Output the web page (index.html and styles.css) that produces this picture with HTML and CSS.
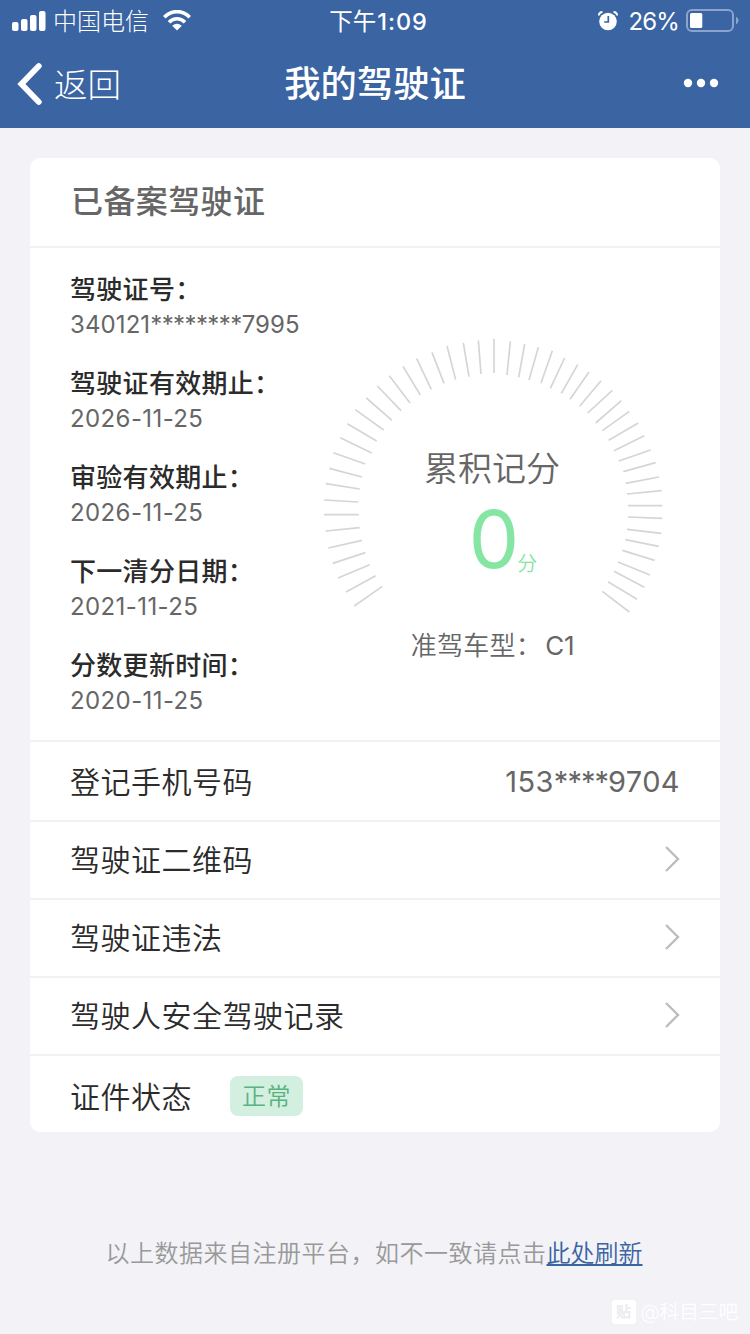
FILE: index.html
```
<!doctype html>
<html lang="zh-CN">

<head>
  <meta charset="UTF-8" />
  <meta name="viewport" content="width=device-width" />
  <title>我的驾驶证</title>
  <link rel="stylesheet" href="styles.css">
</head>

<body>
  <header class="top">
    <div class="status">
      <div class="status-left">
        <svg class="signal" width="34" height="22" viewBox="0 0 34 22" fill="#fff">
          <rect x="0" y="12" width="6.5" height="9" rx="2" />
          <rect x="9" y="9" width="6.5" height="12" rx="2" />
          <rect x="18" y="5" width="6.5" height="16" rx="2" />
          <rect x="27" y="1" width="6.5" height="20" rx="2" />
        </svg>
        <span class="carrier">中国电信</span>
        <svg class="wifi" width="28" height="21" viewBox="0 0 28 21" fill="none" stroke="#fff">
          <path d="M1.3 7.2C8.5-.2 19.5-.2 26.7 7.2" stroke-width="3.7" />
          <path d="M6 12.2C10.7 7.6 17.3 7.6 22 12.2" stroke-width="3.6" />
          <path d="M9.2 15.8Q14 11.8 18.8 15.8L14 20.6Z" fill="#fff" stroke="none" />
        </svg>
      </div>
      <div class="time">下午<span>1:09</span></div>
      <div class="status-right">
        <svg class="alarm" width="20" height="20" viewBox="0 0 20 20">
          <circle cx="10" cy="10.5" r="8.8" fill="#fff" />
          <path d="M.8 4.5Q1 1.2 4.5 1M19.2 4.5Q19 1.2 15.5 1" fill="none" stroke="#fff" stroke-width="1.8" />
          <path d="M10.3 5v6H6.2" fill="none" stroke="#3a64a2" stroke-width="1.7" />
        </svg>
        <span class="percent">26%</span>
        <svg class="battery" width="54" height="24" viewBox="0 0 54 24">
          <rect x="1" y="1" width="46" height="21" rx="5" fill="none" stroke="#8aa4cd" stroke-width="2" />
          <rect x="4" y="4" width="12.3" height="15" rx="1.5" fill="#fff" />
          <path d="M50 7.5q5 4 0 8z" fill="#8aa4cd" />
        </svg>
      </div>
    </div>
    <nav class="nav">
      <a class="back">
        <svg width="26" height="44" viewBox="0 0 26 44" fill="none" stroke="#fff" stroke-width="5.8" stroke-linecap="round" stroke-linejoin="miter">
          <path d="M21.8 4 4.4 22l17.4 18" />
        </svg>
        <span>返回</span>
      </a>
      <h1>我的驾驶证</h1>
      <svg class="more" width="36" height="10" viewBox="0 0 36 10" fill="#fff">
        <circle cx="5" cy="5" r="4.2" />
        <circle cx="18" cy="5" r="4.2" />
        <circle cx="31" cy="5" r="4.2" />
      </svg>
    </nav>
  </header>

  <main class="card">
    <h2>已备案驾驶证</h2>
    <section class="info">
      <dl>
        <dt>驾驶证号：</dt>
        <dd class="code">340121<i>********</i>7995</dd>
        <dt>驾驶证有效期止：</dt>
        <dd>2026-11-25</dd>
        <dt>审验有效期止：</dt>
        <dd>2026-11-25</dd>
        <dt>下一清分日期：</dt>
        <dd>2021-11-25</dd>
        <dt>分数更新时间：</dt>
        <dd>2020-11-25</dd>
      </dl>
      <div class="gauge">
        <svg class="dial" width="370" height="300" viewBox="0 0 1110 900" fill="none" stroke="#d5d5d5" stroke-width="5">
          <path d="M133 828 217 769M108 786 197 737M84 744 179 704M68 700 166 668M55 654 156 631M47 603 149 593M42 554H146M42 510 145 516M47 461 149 477M58 415 156 441M70 368 166 402M91 323 185 369M112 281 200 333M136 239 221 300M169 204 246 271M202 168 273 242M238 137 300 219M279 109 331 195M320 86 364 178M366 67 402 160M411 48 437 149M460 39 477 140M505 31 513 132M552 26V129" />
          <path transform="translate(540)" d="M61 34 51 135M104 42 86 142M145 52 117 150M187 62 153 159M224 84 181 175M263 104 214 190M297 126 240 208M333 152 269 229M367 181 293 249M394 212 317 279M418 244 337 302M445 279 356 331M463 317 372 362M482 360 386 393M497 398 400 425M507 441 407 460M515 482 411 492M517 527H414M517 565 414 561M514 610 411 598M506 649 406 629M494 691 397 661M480 735 384 696M463 772 372 724M441 808 354 755M418 846 337 784" />
        </svg>
        <div class="score">
          <p class="score-title">累积记分</p>
          <p class="score-value"><b>0</b><span>分</span></p>
        </div>
        <p class="type">准驾车型：<span>C1</span></p>
      </div>
    </section>
    <div class="row phone">
      <span>登记手机号码</span>
      <span class="number">153<i>****</i>9704</span>
    </div>
    <a class="row">
      <span>驾驶证二维码</span>
      <svg class="arrow" width="16" height="28" viewBox="0 0 16 28"><path d="M2 2 14 14 2 26" /></svg>
    </a>
    <a class="row">
      <span>驾驶证违法</span>
      <svg class="arrow" width="16" height="28" viewBox="0 0 16 28"><path d="M2 2 14 14 2 26" /></svg>
    </a>
    <a class="row">
      <span>驾驶人安全驾驶记录</span>
      <svg class="arrow" width="16" height="28" viewBox="0 0 16 28"><path d="M2 2 14 14 2 26" /></svg>
    </a>
    <div class="row state">
      <span>证件状态</span>
      <span class="tag">正常</span>
    </div>
  </main>

  <p class="tip">以上数据来自注册平台，如不一致请点击<a>此处刷新</a></p>
  <footer class="mark"><span class="mark-icon">贴</span><span>@科目三吧</span></footer>
</body>

</html>
```
FILE: styles.css
```
* {
  box-sizing: border-box;
}

body {
  margin: 0;
  height: 1334px;
  overflow: hidden;
  background: #f2f2f7;
  color: #2b2b2b;
  font-family: Inter, "Noto Sans CJK SC", sans-serif;
  font-weight: 350;
  display: flex;
  flex-direction: column;
}

h1, h2, p, dl, dd {
  margin: 0;
}

i {
  font-style: normal;
}

svg {
  display: block;
  flex: none;
}

/* 顶部 */
.top {
  height: 128px;
  background: #3a64a2;
  color: #fff;
}

.status {
  height: 40px;
  display: grid;
  grid-template-columns: 1fr auto 1fr;
  align-items: center;
  padding: 0 10px 0 12px;
  line-height: 40px;
}

.status-left,
.status-right {
  display: flex;
  align-items: center;
}

.status-right {
  justify-content: flex-end;
}

.signal,
.wifi,
.alarm,
.battery {
  margin-bottom: 1px;
}

.carrier {
  margin: 0 14px 0 7px;
  padding-top: 2px;
  font-size: 24px;
  font-weight: 300;
}

.time {
  padding: 2px 0 0 5px;
  font-size: 23.5px;
  font-weight: 400;
}

.time span {
  margin-left: 1px;
  font-weight: 500;
  letter-spacing: 0.9px;
}

.percent {
  margin: 0 7px 0 11px;
  padding-top: 2px;
  font-size: 24px;
  font-weight: 400;
  letter-spacing: -0.9px;
}

.nav {
  height: 88px;
  display: grid;
  grid-template-columns: 1fr auto 1fr;
  align-items: center;
  padding: 0 17px;
}

.back {
  display: flex;
  align-items: center;
  gap: 11px;
  font-size: 33.5px;
  font-weight: 300;
}

.back span {
  padding-bottom: 3px;
}

.nav h1 {
  font-size: 36.3px;
  font-weight: 500;
  line-height: 50px;
}

.more {
  justify-self: end;
  margin: 0 14px 2px 0;
}

/* 卡片 */
.card {
  width: 690px;
  height: 974px;
  margin: 30px 30px 0;
  border-radius: 10px;
  background: #fff;
}

.card h2 {
  height: 90px;
  padding-left: 41px;
  border-bottom: 2px solid #f1f1f3;
  color: #666;
  font-size: 32px;
  font-weight: 500;
  line-height: 88px;
  letter-spacing: 0.4px;
}

.info {
  height: 492px;
  display: grid;
  grid-template-columns: 280px 370px;
}

dl {
  padding: 23px 0 0 40px;
}

dt {
  height: 37px;
  font-size: 26px;
  font-weight: 500;
  line-height: 38px;
  letter-spacing: 0.3px;
  white-space: nowrap;
}

dd {
  height: 34px;
  margin-bottom: 23px;
  color: #666;
  font-size: 24px;
  font-weight: 400;
  line-height: 34px;
  letter-spacing: 0.4px;
  white-space: nowrap;
}

.code {
  letter-spacing: 0.1px;
}

.code i {
  letter-spacing: -0.6px;
}

.gauge {
  padding-top: 82px;
  display: grid;
  grid-template-rows: 300px auto;
  color: #666;
  text-align: center;
}

.dial,
.score {
  grid-area: 1 / 1;
}

.score {
  padding: 115px 6px 0 0;
}

.score-title {
  font-size: 34px;
  line-height: 48px;
}

.score-value {
  display: flex;
  justify-content: center;
  align-items: baseline;
  padding-left: 22px;
  color: #85e5a3;
  line-height: 92px;
}

.score-value b {
  font-size: 80px;
  font-weight: 400;
}

.score-value span {
  margin-left: -2px;
  font-size: 20px;
  transform: translateY(3px);
}

.type {
  padding-right: 5px;
  font-size: 26px;
  line-height: 32px;
  letter-spacing: 0.3px;
}

.type span {
  margin-left: 3px;
  font-weight: 400;
  letter-spacing: -0.2px;
}

.row {
  height: 78px;
  padding: 0 40px 2px;
  border-top: 2px solid #f1f1f3;
  display: flex;
  align-items: center;
  justify-content: space-between;
  font-size: 30px;
  letter-spacing: 0.5px;
}

.row > span:first-child {
  margin-bottom: 2px;
}

.phone {
  height: 80px;
  padding-bottom: 0;
}

.number {
  color: #666;
  font-size: 29px;
  font-weight: 400;
  letter-spacing: 0.4px;
}

.number i {
  letter-spacing: -1px;
}

.arrow {
  fill: none;
  stroke: #bdbdbd;
  stroke-width: 2.4;
}

.state {
  justify-content: flex-start;
  gap: 38px;
  padding-top: 4px;
  padding-bottom: 0;
}

.tag {
  width: 73px;
  height: 40px;
  border-radius: 8px;
  background: #d3efdf;
  color: #58b37f;
  font-size: 24px;
  line-height: 42px;
  text-align: center;
}

/* 底部 */
.tip {
  margin-top: 104px;
  padding-right: 2px;
  color: #999;
  font-size: 24px;
  line-height: 36px;
  letter-spacing: 0.5px;
  text-align: center;
}

.tip a {
  color: #3a64a2;
  letter-spacing: 0;
  text-decoration: underline;
}

.mark {
  margin-top: auto;
  padding: 0 12px 9px 0;
  display: flex;
  justify-content: flex-end;
  align-items: center;
  gap: 5px;
  color: #fff;
  font-size: 19.6px;
  line-height: 26px;
}

.mark-icon {
  width: 24px;
  height: 24px;
  border-radius: 4px;
  background: #fff;
  color: #ebebf0;
  font-size: 15px;
  font-weight: 700;
  line-height: 24px;
  text-align: center;
}
```
